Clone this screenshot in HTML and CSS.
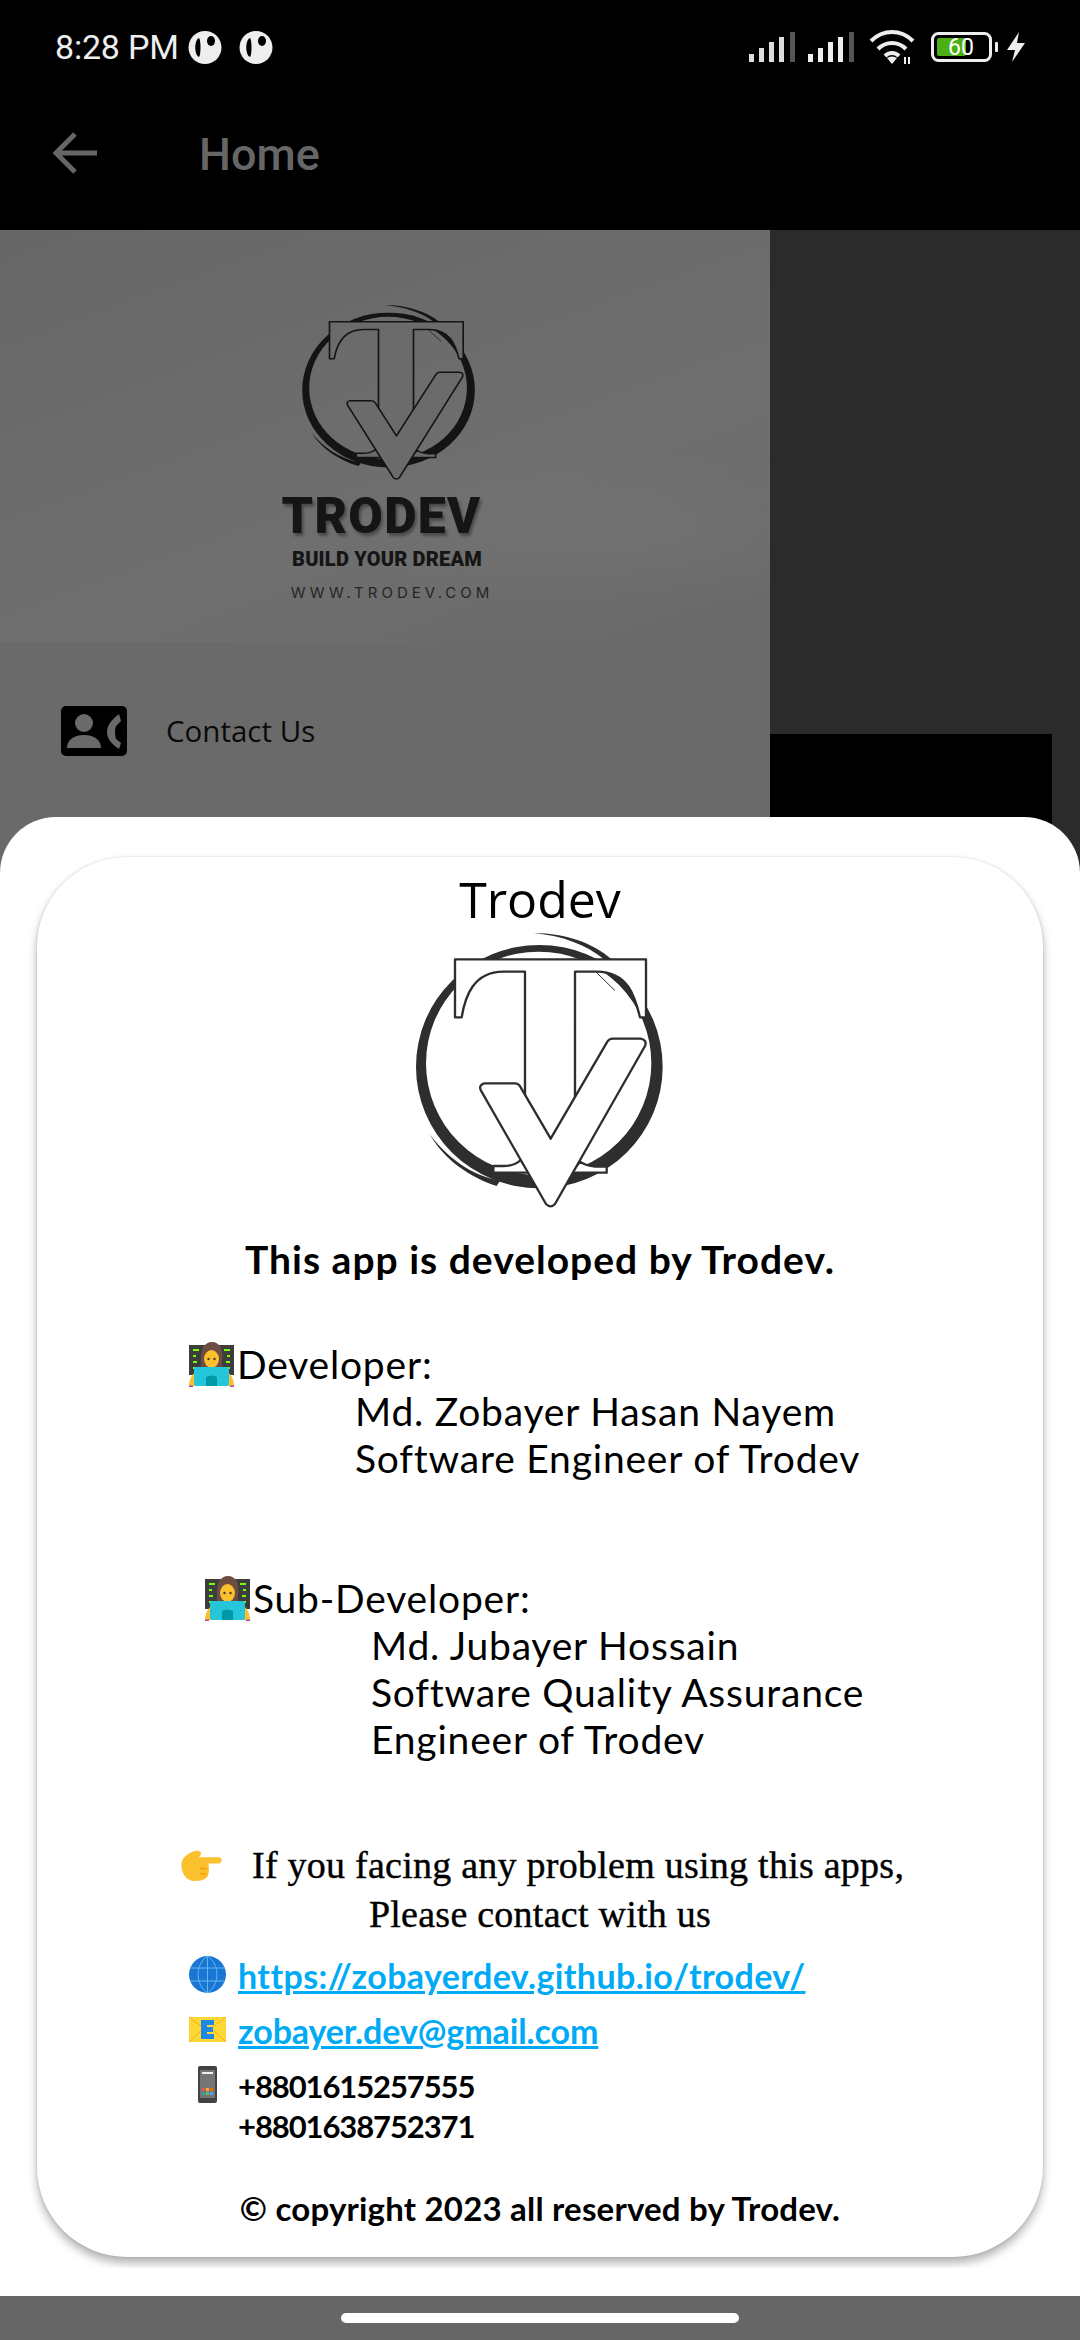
FILE: index.html
```html
<!DOCTYPE html>
<html lang="en">
<head>
<meta charset="utf-8">
<title>Trodev</title>
<link rel="stylesheet" href="styles.css">
</head>
<body>
<svg class="defs" width="0" height="0" aria-hidden="true">
  <defs>
    <symbol id="tv" viewBox="0 0 960 990" preserveAspectRatio="none">
      <path class="ink" fill-rule="evenodd" d="M108 500a370 365 0 1 0 740 0a370 365 0 1 0-740 0ZM138 490a338 335 0 1 0 676 0a338 335 0 1 0-676 0Z"/>
      <path class="ink" d="M462 99C560 100 640 130 695 178L672 178C620 135 550 108 462 99Z"/>
      <path class="ink" d="M148 702C200 770 270 825 360 842L350 858C265 830 195 780 148 702Z"/>
      <path class="paper line" d="M340 818V798H370C395 798 410 792 422 780L450 818ZM680 818V800H645C620 798 610 792 600 785L575 818Z"/>
      <path class="paper line" d="M225 178H798V352H780C765 290 745 215 650 215H585V760H435V215H370C280 215 255 290 245 352H225Z"/>
      <path class="thin" d="M650 218L705 272"/>
      <path class="paper line" d="M312 550H405Q416 550 422 562L512 716L682 425Q688 416 698 416H782Q802 420 795 438L525 912Q512 926 498 912L303 572Q295 556 312 550Z"/>
    </symbol>
    <symbol id="tech" viewBox="0 0 47 45">
      <rect x="1" y="3" width="45" height="30" fill="#3d3d3d"/>
      <path d="M5 8h6M5 14h3M5 20h4M5 26h3M36 8h6M39 14h3M38 20h4M39 26h3" stroke="#76ff03" stroke-width="2"/>
      <path d="M13 20C12 6 17 0 24 0s12 6 10 20v8H13Z" fill="#6d4c41"/>
      <ellipse cx="23.500" cy="17" rx="7.500" ry="9" fill="#fbc02d"/>
      <circle cx="20.500" cy="17" r="1.200" fill="#4e342e"/><circle cx="26.500" cy="17" r="1.200" fill="#4e342e"/>
      <path d="M1 44C1 36 5 30 12 28h23c7 2 11 8 11 16Z" fill="#fbc02d"/>
      <rect x="6" y="25" width="35" height="19" rx="2" fill="#26c6da"/>
      <path d="M18 44V35q5-3 11 0v9Z" fill="#0097a7"/>
      <rect x="1" y="43.500" width="4" height="1.500" fill="#ab47bc"/><rect x="42" y="43.500" width="4" height="1.500" fill="#ab47bc"/>
    </symbol>
    <symbol id="hand" viewBox="0 0 40 30">
      <path d="M1 14C1 8 7 3 14 1c3-1 6 0 6 2 0 2-1 3-2 4h19c2 0 3 1 3 3s-1 3-3 3H27c1 4 1 10-1 13-2 3-6 4-12 4C5 30 1 22 1 14Z" fill="#fbc02d"/>
      <path d="M19 18h7M19 23h6" stroke="#f59f00" stroke-width="1.500"/>
    </symbol>
    <symbol id="globe" viewBox="0 0 37 37">
      <circle cx="18.500" cy="18.500" r="18.500" fill="#1976d2"/>
      <path d="M18.500 0C6 8 6 29 18.500 37C31 29 31 8 18.500 0ZM18.500 0V37M1 12H36M1 25H36" fill="none" stroke="#64b5f6" stroke-width="1"/>
    </symbol>
    <symbol id="mail" viewBox="0 0 37 25">
      <rect width="37" height="25" fill="#fdd835"/>
      <path d="M0 0 16 12M37 0 21 12M0 25 14 12M37 25 23 12" stroke="#f9a825" stroke-width="1" fill="none"/>
      <path d="M12 3H25V8H18V10H24V15H18V17H25V22H12Z" fill="#1e88e5"/>
    </symbol>
    <symbol id="mobile" viewBox="0 0 19 37">
      <rect width="19" height="37" rx="2" fill="#424242"/>
      <rect x="2" y="4" width="15" height="28" fill="#757575"/>
      <rect x="4" y="6" width="11" height="2" fill="#eee"/>
      <rect x="4" y="22" width="3" height="3" fill="#ef5350"/><rect x="8" y="22" width="3" height="3" fill="#ffa726"/><rect x="12" y="22" width="3" height="3" fill="#ef6c00"/>
      <rect x="4" y="26" width="3" height="3" fill="#26a69a"/><rect x="8" y="26" width="3" height="3" fill="#66bb6a"/><rect x="12" y="26" width="3" height="3" fill="#42a5f5"/>
    </symbol>
    <symbol id="pip" viewBox="0 0 34 33">
      <ellipse cx="17" cy="16.500" rx="16.500" ry="16.500" fill="#eee"/>
      <path d="M11 7C6 9 6 24 11 26C13 24 13 9 11 7Z" fill="#000"/>
      <ellipse cx="23" cy="10" rx="4" ry="5" fill="#000"/>
    </symbol>
  </defs>
</svg>

<div class="statusbar">
  <span class="time">8:28 PM</span>
  <svg class="pip"><use href="#pip"/></svg>
  <svg class="pip pip-two"><use href="#pip"/></svg>
  <span class="grow"></span>
  <svg class="signal" viewBox="0 0 48 30"><path d="M1 22h5v8H1ZM11 16h5v14h-5ZM21 10h5v20h-5ZM31 5h5v25h-5Z" fill="#ddd"/><path d="M42 0h5v30h-5Z" fill="#555"/></svg>
  <svg class="signal" viewBox="0 0 48 30"><path d="M1 22h5v8H1ZM11 16h5v14h-5ZM21 10h5v20h-5ZM31 5h5v25h-5Z" fill="#eee"/><path d="M42 0h5v30h-5Z" fill="#555"/></svg>
  <svg class="wifi" viewBox="0 0 48 36"><path d="M3 12C15 0 33 0 45 12M10 20C18 12 30 12 38 20M17 27C21 23 27 23 31 27" fill="none" stroke="#eee" stroke-width="4"/><path d="M24 35 19 29Q24 26 29 29Z" fill="#eee"/><path d="M37 28v7M41 28v7" stroke="#eee" stroke-width="2"/></svg>
  <svg class="battery" viewBox="0 0 68 30"><rect x="1.500" y="1.500" width="58" height="27" rx="6" fill="none" stroke="#eee" stroke-width="3"/><rect x="6" y="6" width="29" height="18" rx="2" fill="#4caf14"/><rect x="64" y="10" width="3" height="10" rx="1" fill="#eee"/><text class="batt-num" x="30" y="23">60</text></svg>
  <svg class="bolt" viewBox="0 0 18 30"><path d="M12 0 0 18H8L5 30 18 11H10Z" fill="#eee"/></svg>
</div>

<div class="appbar">
  <svg class="back" viewBox="0 0 44 42"><path d="M22 2 3 21 22 40M3 21H44" fill="none" stroke="#666" stroke-width="5"/></svg>
  <span class="apptitle">Home</span>
</div>

<div class="stage">
  <aside class="drawer">
    <div class="drawer-head">
      <svg class="logo-sm"><use href="#tv"/></svg>
      <div class="brand">TRODEV</div>
      <div class="tagline">BUILD YOUR DREAM</div>
      <div class="site">WWW.TRODEV.COM</div>
    </div>
    <div class="menu-row">
      <svg class="contact-ic" viewBox="0 0 66 50"><rect width="66" height="50" rx="5" fill="#000"/><circle cx="23" cy="17" r="9" fill="#6a6a6a"/><path d="M6 42C6 33 14 29 23 29s17 4 17 13Z" fill="#6a6a6a"/><path d="M58 8C50 14 46 20 46 26s4 12 12 17l2-6-5-4q-2-7 0-13l5-5Z" fill="#6a6a6a"/></svg>
      <span class="menu-label">Contact Us</span>
    </div>
  </aside>
  <div class="scrim"><div class="black-block"></div></div>
</div>

<section class="sheet">
  <div class="card-clip">
  <div class="card">
    <h1 class="title">Trodev</h1>
    <svg class="logo-lg"><use href="#tv"/></svg>
    <p class="lead">This app is developed by Trodev.</p>

    <div class="person person-dev">
      <div class="role"><svg class="emoji-tech"><use href="#tech"/></svg><span>Developer:</span></div>
      <div class="detail">Md. Zobayer Hasan Nayem</div>
      <div class="detail">Software Engineer of Trodev</div>
    </div>

    <div class="person person-sub">
      <div class="role"><svg class="emoji-tech"><use href="#tech"/></svg><span>Sub-Developer:</span></div>
      <div class="detail">Md. Jubayer Hossain</div>
      <div class="detail">Software Quality Assurance</div>
      <div class="detail">Engineer of Trodev</div>
    </div>

    <div class="notice">
      <div class="notice-first"><svg class="emoji-hand"><use href="#hand"/></svg><span>If you facing any problem using this apps,</span></div>
      <div class="notice-second">Please contact with us</div>
    </div>

    <div class="contact-line line-web"><span class="ic"><svg class="emoji-globe"><use href="#globe"/></svg></span><a class="link link-web" href="#">https://zobayerdev.github.io/trodev/</a></div>
    <div class="contact-line line-mail"><span class="ic"><svg class="emoji-mail"><use href="#mail"/></svg></span><a class="link link-mail" href="#">zobayer.dev@gmail.com</a></div>
    <div class="contact-line line-phone"><span class="ic"><svg class="emoji-mobile"><use href="#mobile"/></svg></span><div class="phones"><div>+8801615257555</div><div>+8801638752371</div></div></div>

    <p class="copyright">© copyright 2023 all reserved by Trodev.</p>
  </div>
  </div>
</section>

<div class="navbar"><span class="handle"></span></div>
</body>
</html>
```

FILE: styles.css
```css
* { box-sizing: border-box; }
html, body { margin: 0; padding: 0; }
body {
  position: relative;
  width: 1080px;
  height: 2340px;
  overflow: hidden;
  background: #000;
  display: flex;
  flex-direction: column;
  font-family: "Lato", "Open Sans", sans-serif;
  color: #000;
}
.defs { position: absolute; }
.ink { fill: var(--ink); }
.paper { fill: var(--paper); }
.line { stroke: var(--ink); stroke-width: 7; stroke-linejoin: round; }
.thin { fill: none; stroke: var(--ink); stroke-width: 3; }

.statusbar {
  height: 94px;
  flex: none;
  display: flex;
  align-items: center;
  padding: 0 55px;
  color: #eee;
}
.time { font: 400 34px/1 "Roboto", sans-serif; letter-spacing: -0.2px; width: 133px; }
.pip { width: 34px; height: 33px; flex: none; }
.pip-two { margin-left: 17px; }
.grow { flex: 1; }
.signal { width: 48px; height: 30px; margin-right: 11px; flex: none; }
.wifi { width: 48px; height: 36px; margin-left: 2px; flex: none; }
.battery { width: 68px; height: 30px; margin-left: 15px; flex: none; }
.batt-num { font: 400 23px "Roboto", sans-serif; fill: #fff; text-anchor: middle; }
.bolt { width: 18px; height: 30px; margin-left: 8px; flex: none; }

.appbar {
  height: 136px;
  flex: none;
  display: flex;
  align-items: center;
  padding-left: 53px;
  padding-bottom: 18px;
}
.back { width: 44px; height: 42px; flex: none; }
.apptitle { margin-left: 102px; font: 500 45px/1 "Roboto", sans-serif; color: #666; padding-top: 3px; }

.stage { flex: 1; display: flex; min-height: 0; }
.drawer { width: 770px; background: #6a6a6a; flex: none; }
.drawer-head {
  height: 412px;
  display: flex;
  flex-direction: column;
  align-items: center;
  color: #151515;
  padding-top: 54px;
  background:
    radial-gradient(ellipse 420px 120px at 620px 300px, rgba(255,255,255,.035), transparent 70%),
    linear-gradient(160deg, #666 0%, #6c6c6c 40%, #6f6f6f 62%, #696969 100%);
}
.logo-sm { --ink: #141414; --paper: #6b6b6b; width: 224px; height: 210px; flex: none; margin-left: 7px; }
.brand { font: 900 50px/1 "Roboto", sans-serif; letter-spacing: 1.300px; text-shadow: 2px 3px 3px rgba(0,0,0,.35); margin-top: -3px; margin-left: -7px; }
.tagline { font: 900 20px/1 "Roboto", sans-serif; letter-spacing: .2px; margin-top: 8px; margin-left: 4px; }
.site { font: 400 15px/1 "Inter", sans-serif; letter-spacing: 4px; margin-top: 16px; margin-left: 14px; color: #252525; }
.menu-row { display: flex; align-items: center; padding: 64px 0 0 61px; }
.contact-ic { width: 66px; height: 50px; flex: none; }
.menu-label { margin-left: 39px; font: 400 29.500px/1 "Open Sans", sans-serif; color: #0a0a0a; }
.scrim { flex: 1; background: #2b2b2b; padding-top: 504px; }
.black-block { width: 282px; height: 100px; background: #000; }

.sheet {
  position: absolute;
  left: 0;
  top: 817px;
  width: 1080px;
  height: 1479px;
  background: #fff;
  border-radius: 56px 56px 0 0;
  overflow: hidden;
}
.card-clip { height: 1451px; overflow: hidden; padding: 40px 37px 0; }
.card {
  height: 1400px;
  border-radius: 90px;
  background: #fff;
  box-shadow: 0 6px 10px rgba(0,0,0,.3), 0 0 3px rgba(0,0,0,.12);
  display: flex;
  flex-direction: column;
}
.title { margin: 17px 0 0; font: 400 50px/1 "Open Sans", sans-serif; text-align: center; }
.logo-lg { --ink: #2e2e2e; --paper: #fff; width: 320px; height: 330px; flex: none; margin: -24px 0 0 343px; }
.lead { margin: 4px 0 0; font: 700 39px/50px "Lato", sans-serif; letter-spacing: 1px; text-align: center; }

.person { font: 400 39px/47px "Lato", sans-serif; letter-spacing: .8px; }
.person-dev { margin: 57px 0 0 151px; }
.person-sub { margin: 93px 0 0 167px; }
.role { display: flex; align-items: center; }
.emoji-tech { width: 47px; height: 45px; flex: none; margin-right: 2px; }
.detail { padding-left: 167px; }

.notice { margin-top: 78px; font: 400 38px/49px "Liberation Serif", serif; letter-spacing: .25px; -webkit-text-stroke: .4px #000; }
.notice-first { display: flex; align-items: center; margin-left: 143px; }
.emoji-hand { width: 42px; height: 31px; flex: none; margin-right: 30px; }
.notice-second { text-align: center; }

.contact-line { display: flex; margin-left: 152px; font: 700 34px/40px "Lato", sans-serif; }
.ic { width: 49px; display: flex; flex: none; }
.line-web { margin-top: 17px; }
.line-mail { margin-top: 15px; }
.line-phone { margin-top: 15px; font-size: 31px; letter-spacing: -1.100px; }
.link { color: #00aaf5; text-decoration: underline; }
.link-web { letter-spacing: .4px; }
.link-mail { letter-spacing: -.1px; }
.emoji-globe { width: 37px; height: 37px; }
.emoji-mail { width: 37px; height: 25px; margin-top: 6px; }
.emoji-mobile { width: 19px; height: 37px; margin-left: 9px; }
.copyright { margin: 42px 0 0; text-align: center; font: 700 33px/40px "Lato", sans-serif; letter-spacing: .2px; }

.navbar {
  position: absolute;
  left: 0;
  top: 2296px;
  width: 1080px;
  height: 44px;
  background: #666;
  display: flex;
  justify-content: center;
  padding-top: 17px;
}
.handle { width: 398px; height: 10px; border-radius: 5px; background: #fff; }
```
